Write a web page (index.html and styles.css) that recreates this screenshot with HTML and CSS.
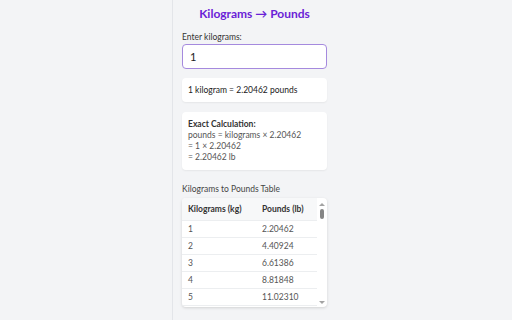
FILE: index.html
```html
<!DOCTYPE html>
<html lang="en">
<head>
  <meta charset="UTF-8" />
  <title>Kilograms to Pounds</title>
  <link rel="stylesheet" href="styles.css">
</head>
<body>
  <div id="panel">
    <h1>Kilograms → Pounds</h1>

    <label for="kg">Enter kilograms:</label>
    <input type="text" id="kg" value="1" />

    <div class="card result" id="result">1 kilogram = 2.20462 pounds</div>

    <div class="card calc">
      <div class="calc-title">Exact Calculation:</div>
      <div>pounds = kilograms × 2.20462</div>
      <div>= 1 × 2.20462</div>
      <div>= 2.20462 lb</div>
    </div>

    <div class="table-label">Kilograms to Pounds Table</div>
    <div class="table-box">
      <div class="table-scroll">
        <table>
          <thead>
            <tr><th>Kilograms (kg)</th><th>Pounds (lb)</th></tr>
          </thead>
          <tbody id="rows"></tbody>
        </table>
      </div>
      <!-- полоса прокрутки -->
      <div class="scrollbar">
        <span class="arrow up"></span>
        <span class="thumb"></span>
        <span class="track"></span>
        <span class="arrow down"></span>
      </div>
    </div>
  </div>

  <script>
    // строки таблицы 1..50
    const rows = document.getElementById("rows");
    for (let kg = 1; kg <= 50; kg++) {
      const tr = document.createElement("tr");
      tr.innerHTML = "<td>" + kg + "</td><td>" + (kg * 2.20462).toFixed(5) + "</td>";
      rows.appendChild(tr);
    }
  </script>
</body>
</html>
```

FILE: styles.css
```css
body {
  margin: 0;
  background-color: #f3f4f6;
  font-family: Lato, "Open Sans", Arial, sans-serif;
  color: #333;
}

#panel {
  margin-left: 172px;
  width: 155px;
  min-height: 320px;
  box-sizing: border-box;
  padding: 5px 0 0 9px;
  border-left: 1px solid #e3e5e9;
}

h1 {
  margin: 0;
  width: 145px;
  font-size: 12px;
  line-height: 18px;
  font-weight: 700;
  color: #6a22d6;
  text-align: center;
}

label {
  display: block;
  margin-top: 9px;
  margin-bottom: 1px;
  font-size: 8.5px;
  line-height: 11px;
  color: #333;
}

input {
  display: block;
  width: 145px;
  height: 25px;
  box-sizing: border-box;
  padding: 0 7px;
  border: 1.5px solid #a58ade;
  border-radius: 4px;
  background-color: #fff;
  font-family: inherit;
  font-size: 11px;
  color: #222;
  outline: none;
}

.card {
  width: 145px;
  box-sizing: border-box;
  background-color: #fff;
  border-radius: 4px;
  box-shadow: 0 1px 2px rgba(0, 0, 0, 0.06);
  font-size: 8.5px;
  padding: 0 6px;
}

.result {
  margin-top: 9px;
  height: 24px;
  line-height: 24px;
  color: #222;
}

.calc {
  margin-top: 10px;
  padding: 7px 6px;
  line-height: 11px;
  color: #555;
}

.calc-title {
  font-weight: 700;
  color: #333;
}

.table-label {
  margin-top: 14px;
  font-size: 8.5px;
  line-height: 11px;
  color: #444;
}

.table-box {
  display: flex;
  margin-top: 3px;
  width: 145px;
  height: 109px;
  overflow: hidden;
  background-color: #fff;
  border-radius: 4px;
  box-shadow: 0 1px 3px rgba(0, 0, 0, 0.14);
}

.table-scroll {
  flex: 1;
  overflow: hidden;
}

table {
  width: 100%;
  border-collapse: collapse;
  font-size: 8.5px;
}

th {
  height: 22px;
  padding: 0 6px;
  text-align: left;
  font-weight: 700;
  color: #333;
  background-color: #f7f8f9;
  white-space: nowrap;
}

td {
  height: 16px;
  padding: 0 6px;
  line-height: 15px;
  color: #555;
  border-top: 1px solid #eceef0;
}

th:first-child,
td:first-child {
  width: 62px;
}

/* ---------- Полоса прокрутки ---------- */
.scrollbar {
  width: 10px;
  display: flex;
  flex-direction: column;
  align-items: center;
  padding: 5px 0 3px;
  box-sizing: border-box;
}

.arrow {
  width: 0;
  height: 0;
  border-left: 3px solid transparent;
  border-right: 3px solid transparent;
}

.arrow.up {
  border-bottom: 3px solid #a3a3a3;
}

.arrow.down {
  border-top: 3px solid #a3a3a3;
}

.thumb {
  width: 4px;
  height: 10px;
  margin-top: 3px;
  border-radius: 2px;
  background-color: #858585;
}

.track {
  flex: 1;
}
```
